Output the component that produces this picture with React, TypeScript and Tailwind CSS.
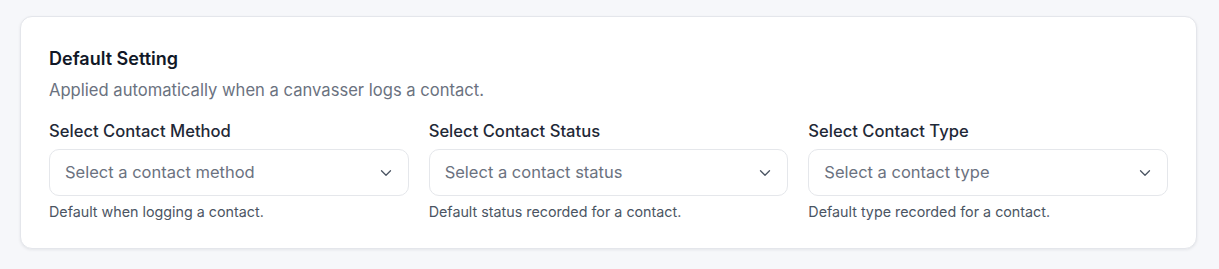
import { ChevronDown } from "lucide-react";

const fields = [
  {
    label: "Select Contact Method",
    placeholder: "Select a contact method",
    hint: "Default when logging a contact.",
  },
  {
    label: "Select Contact Status",
    placeholder: "Select a contact status",
    hint: "Default status recorded for a contact.",
  },
  {
    label: "Select Contact Type",
    placeholder: "Select a contact type",
    hint: "Default type recorded for a contact.",
  },
];

export default function App() {
  return (
    <div className="min-h-[269px] bg-[#f6f7fa] pt-4 pl-5 pr-[22px] font-['Inter',sans-serif]">
      <section className="rounded-xl border border-[#e4e6eb] bg-white px-7 pt-7 pb-[26px] shadow-[0_1px_3px_rgba(16,24,40,0.08)]">
        <h2 className="text-lg font-semibold leading-7 text-[#111827]">Default Setting</h2>
        <p className="mt-[5px] text-[16.6px] leading-6 text-[#6b7280]">
          Applied automatically when a canvasser logs a contact.
        </p>

        <div className="mt-[17px] grid grid-cols-3 gap-5">
          {fields.map((f) => (
            <div key={f.label}>
              <label className="mb-1.5 block text-[16.6px] font-medium leading-6 text-[#1f2937]">
                {f.label}
              </label>
              <button
                type="button"
                className="flex h-[47px] w-full items-center justify-between rounded-[10px] border border-[#e5e7eb] bg-white pl-[15px] pr-3 text-left text-[16.5px] text-[#6b7280]"
              >
                <span>{f.placeholder}</span>
                <ChevronDown size={18} strokeWidth={1.75} className="mr-px text-[#4b5563]" />
              </button>
              <p className="mt-1.5 text-[14.3px] leading-5 text-[#4b5563]">{f.hint}</p>
            </div>
          ))}
        </div>
      </section>
    </div>
  );
}
